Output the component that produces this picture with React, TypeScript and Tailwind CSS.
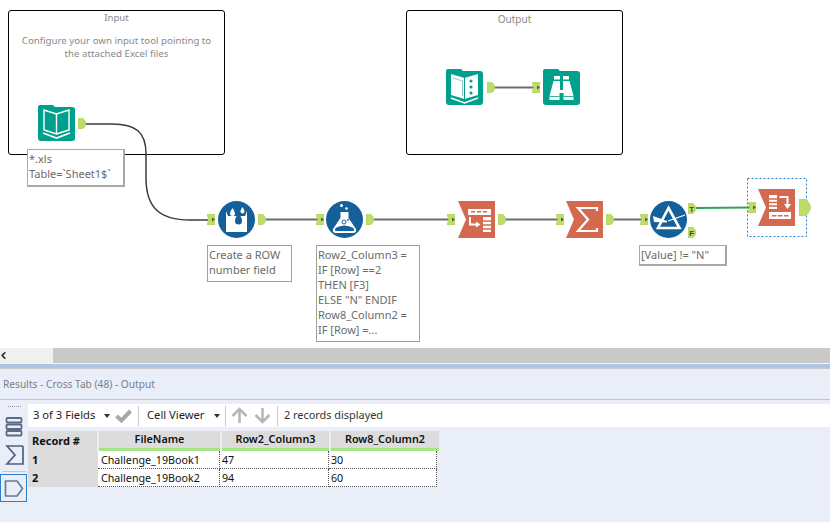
import { ChevronLeft } from "lucide-react";
import type { ReactNode } from "react";

const teal = "#00a08c";
const orange = "#d5694f";
const blue = "#14609b";

function InAnchor({ className }: { className: string }) {
  return (
    <svg className={`absolute ${className}`} width="8" height="11" viewBox="0 0 8 11">
      <path d="M0 0H8V11H0L1.500 5.500Z" fill="#bfdc6b" stroke="#a9c75a" strokeWidth="0.500" />
      <path d="M5 3.500L8 5.500L5 7.500Z" fill="#4e5f34" />
    </svg>
  );
}

function OutAnchor({ className, label }: { className: string; label?: string }) {
  return (
    <svg className={`absolute ${className}`} width="8" height="11" viewBox="0 0 8 11">
      <path d="M0 0H4Q7 1 8 5.500Q7 10 4 11H0Z" fill="#bfdc6b" stroke="#a9c75a" strokeWidth="0.500" />
      {label && (
        <text x="3.800" y="8.500" fontSize="8" fontWeight="700" textAnchor="middle" fill="#33503a" fontFamily="Liberation Sans, sans-serif">
          {label}
        </text>
      )}
    </svg>
  );
}

function Tool({ className, children }: { className: string; children: ReactNode }) {
  return (
    <svg className={`absolute ${className}`} width="37" height="37" viewBox="0 0 37 37">
      {children}
    </svg>
  );
}

const folder = <path d="M2 0H15L17 2H34Q37 2 37 5V33Q37 36 34 36H3Q0 36 0 33V2Q0 0 2 0Z" fill={teal} />;
const ribbon = <path d="M0 0H37V37H0L8 18.500Z" fill={orange} />;

function Note({ className, children }: { className: string; children: ReactNode }) {
  return (
    <div className={`absolute border border-[#a0a0a0] bg-white px-[1px] py-[1px] text-[11px] leading-[15px] text-[#6b6b6b] ${className}`}>
      {children}
    </div>
  );
}

function Canvas() {
  return (
    <div className="relative h-[348px] overflow-hidden bg-white">
      {/* containers */}
      <div className="absolute left-[8px] top-[10px] h-[145px] w-[217px] rounded-[3px] border border-black text-center text-[9.700px] text-[#8a8a8a]">
        <div className="leading-[14px]">Input</div>
        <div className="mt-[10px] leading-[12.500px]">
          <div>Configure your own input tool pointing to</div>
          <div>the attached Excel files</div>
        </div>
      </div>
      <div className="absolute left-[406px] top-[10px] h-[145px] w-[217px] rounded-[3px] border border-black text-center text-[10px] leading-[14px] text-[#8a8a8a]">
        <div className="mt-[1px]">Output</div>
      </div>

      {/* connections */}
      <svg className="absolute left-0 top-0" width="830" height="348" fill="none">
        <path d="M85 124H112C136 124 146 132 146 154V178C146 208 160 220 190 220H208" stroke="#3c3c3c" strokeWidth="1.500" />
        <g stroke="#6e6e6e" strokeWidth="2">
          <path d="M494 87.500H535" />
          <path d="M266 219.500H320" />
          <path d="M374 219.500H450" />
          <path d="M505 219.500H560" />
          <path d="M613 219.500H644" />
        </g>
        <path d="M696 208L750 207.500" stroke="#2ea35c" strokeWidth="2" />
        <rect x="747.500" y="178.500" width="59" height="58" stroke="#2b7fd0" strokeDasharray="2 2" />
      </svg>

      {/* input tool */}
      <Tool className="left-[38px] top-[105px]">
        {folder}
        <g fill="none" stroke="#fff" strokeWidth="1.400">
          <path d="M18.500 9L6 5V25L18.500 29L31 25V5Z" />
          <path d="M18.500 9V29" />
        </g>
        <path d="M5 28L18.500 33L32 28" fill="none" stroke="#fff" strokeWidth="1.800" />
      </Tool>
      <OutAnchor className="left-[78px] top-[118px]" />
      <Note className="left-[27px] top-[149px] h-[38px] w-[98px] !border-2 !border-t !border-l !border-[#a8a8a8]">
        *.xls
        <br />
        Table=`Sheet1$`
      </Note>

      {/* output tool and browse */}
      <Tool className="left-[446px] top-[69px]">
        {folder}
        <path d="M18.500 9L5 5V26L18.500 30L32 26V5Z" fill="#fff" />
        <path d="M18.500 9V30" stroke={teal} strokeWidth="1" />
        <path d="M7 9L16.500 12V27" fill="none" stroke={teal} strokeWidth="0.500" />
        <g fill={teal}>
          <circle cx="25" cy="12" r="1.600" />
          <circle cx="25" cy="18" r="1.600" />
          <circle cx="25" cy="24" r="1.600" />
        </g>
        <path d="M5 29L18.500 34L32 29" fill="none" stroke="#fff" strokeWidth="1.600" />
      </Tool>
      <OutAnchor className="left-[487px] top-[82px]" />
      <InAnchor className="left-[532px] top-[82px]" />
      <Tool className="left-[543px] top-[69px]">
        {folder}
        <g fill="#fff">
          <path d="M11 7H17V10.500H11Z" />
          <path d="M20 7H26V10.500H20Z" />
          <path d="M10.500 12H17V21H20V12H26.500L30.500 27V31H20.500V24H16.500V31H6.500V27Z" />
        </g>
        <path d="M6.500 27.500H16.500M20.500 27.500H30.500" stroke={teal} strokeWidth="0.800" />
      </Tool>

      {/* record id */}
      <InAnchor className="left-[207px] top-[214px]" />
      <svg className="absolute left-[218px] top-[201px]" width="37" height="37" viewBox="0 0 37 37">
        <circle cx="18.500" cy="18.500" r="18.500" fill={blue} />
        <path d="M8 10L10 15H27L29 10V31H8Z" fill="#fff" />
        <path d="M14.500 7Q17 10.500 17 12.500A2.500 2.500 0 0 1 12 12.500Q12 10.500 14.500 7Z" fill="#fff" />
        <path d="M20.500 12Q24 17 24 20A3.500 3.500 0 0 1 17 20Q17 17 20.500 12Z" fill={blue} />
        <path d="M24.500 6Q26.500 9 26.500 10.500A2 2 0 0 1 22.500 10.500Q22.500 9 24.500 6Z" fill="#fff" />
      </svg>
      <OutAnchor className="left-[258px] top-[214px]" />
      <Note className="left-[207px] top-[245px] h-[37px] w-[85px]">
        Create a ROW
        <br />
        number field
      </Note>

      {/* formula */}
      <InAnchor className="left-[316px] top-[214px]" />
      <svg className="absolute left-[326px] top-[201px]" width="37" height="37" viewBox="0 0 37 37">
        <circle cx="18.500" cy="18.500" r="18.500" fill={blue} />
        <path d="M14.500 11H22.500V17L30 28Q31 32 27 32H10Q6 32 7 28L14.500 17Z" fill="#fff" />
        <path d="M9.500 27Q18 22 27.500 27L28 30H9Z" fill={blue} />
        <circle cx="15.500" cy="4.500" r="1.500" fill="#fff" />
        <circle cx="20.500" cy="7.500" r="1.300" fill="#fff" />
        <circle cx="18" cy="21" r="2" fill="none" stroke={blue} />
        <circle cx="22" cy="19" r="0.900" fill={blue} />
      </svg>
      <OutAnchor className="left-[366px] top-[214px]" />
      <Note className="left-[316px] top-[245px] h-[97px] w-[104px]">
        Row2_Column3 =
        <br />
        IF [Row] ==2
        <br />
        THEN [F3]
        <br />
        ELSE "N" ENDIF
        <br />
        Row8_Column2 =
        <br />
        IF [Row] =...
      </Note>

      {/* cross tab */}
      <InAnchor className="left-[447px] top-[214px]" />
      <Tool className="left-[458px] top-[201px]">
        {ribbon}
        <rect x="10" y="8" width="23" height="6" fill="#fff" />
        <g fill={orange}>
          <rect x="13" y="10" width="4" height="1.500" />
          <rect x="19" y="10" width="4" height="1.500" />
          <rect x="25" y="10" width="4" height="1.500" />
        </g>
        <path d="M12 16V23.500H19" fill="none" stroke="#fff" strokeWidth="2" />
        <path d="M18 20.500L22.500 23.500L18 26.500Z" fill="#fff" />
        <rect x="25" y="16" width="8" height="15" fill="#fff" />
        <path d="M25 20H33M25 24H33M25 28H33" stroke={orange} strokeWidth="1.500" />
      </Tool>
      <OutAnchor className="left-[498px] top-[214px]" />

      {/* summarize */}
      <InAnchor className="left-[556px] top-[214px]" />
      <Tool className="left-[566px] top-[201px]">
        {ribbon}
        <path d="M31 10V7H12L22 18.500L12 30H31V27" fill="none" stroke="#fff" strokeWidth="2.200" />
      </Tool>
      <OutAnchor className="left-[606px] top-[214px]" />

      {/* filter */}
      <InAnchor className="left-[640px] top-[214px]" />
      <svg className="absolute left-[650px] top-[201px]" width="37" height="37" viewBox="0 0 37 37">
        <circle cx="18.500" cy="18.500" r="18.500" fill={blue} />
        <path d="M18.500 7L29.500 27H8Z" fill="none" stroke="#fff" strokeWidth="2.600" />
        <path d="M18 20L35 14" fill="none" stroke="#fff" strokeWidth="1.200" />
        <path d="M3 15L17 20V21.500L4 21Z" fill="#fff" />
      </svg>
      <OutAnchor className="left-[688px] top-[203px]" label="T" />
      <OutAnchor className="left-[688px] top-[227px]" label="F" />
      <Note className="left-[639px] top-[245px] h-[21px] w-[88px] !border-2 !border-t !border-l !border-[#a8a8a8]">
        [Value] != "N"
      </Note>

      {/* selected cross tab */}
      <InAnchor className="left-[748px] top-[202px]" />
      <Tool className="left-[758px] top-[189px]">
        {ribbon}
        <rect x="11" y="6" width="8" height="14" fill="#fff" />
        <path d="M11 10H19M11 13.500H19M11 17H19" stroke={orange} strokeWidth="1.300" />
        <path d="M21.500 8H29.500V15" fill="none" stroke="#fff" strokeWidth="2" />
        <path d="M26 15H33L29.500 20Z" fill="#fff" />
        <rect x="11" y="23" width="22" height="7" fill="#fff" />
        <g fill={orange}>
          <rect x="14" y="26" width="4.500" height="1.500" />
          <rect x="20" y="26" width="4.500" height="1.500" />
          <rect x="26" y="26" width="4.500" height="1.500" />
        </g>
      </Tool>
      <svg className="absolute left-[799px] top-[199px]" width="12" height="17" viewBox="0 0 12 17">
        <path d="M0 0H6Q10 2 12 8.500Q10 15 6 17H0Z" fill="#bfdc6b" stroke="#a9c75a" strokeWidth="0.500" />
      </svg>
    </div>
  );
}

function Separator() {
  return <div className="h-[20px] w-px bg-[#c8c8c8]" />;
}

function Caret() {
  return <div className="h-0 w-0 border-x-[3.500px] border-t-[4px] border-x-transparent border-t-[#333]" />;
}

function Toolbar() {
  return (
    <div className="flex h-[23px] items-center bg-white pl-[5px] text-[11.200px] text-[#222]">
      <span className="w-[62px] whitespace-nowrap">3 of 3 Fields</span>
      <div className="ml-[9px]">
        <Caret />
      </div>
      <svg className="ml-[5px]" width="17" height="14" viewBox="0 0 17 14">
        <path d="M1.500 7L6.500 11.500L15.500 2" fill="none" stroke="#a8a8a8" strokeWidth="4" />
      </svg>
      <div className="ml-[6px]">
        <Separator />
      </div>
      <span className="ml-[8px] w-[58px] whitespace-nowrap">Cell Viewer</span>
      <div className="ml-[9px]">
        <Caret />
      </div>
      <div className="ml-[5px]">
        <Separator />
      </div>
      <svg className="ml-[5px]" width="17" height="17" viewBox="0 0 17 17">
        <path d="M8.500 16V2M1.500 9L8.500 2L15.500 9" fill="none" stroke="#b5b5b5" strokeWidth="2.500" />
      </svg>
      <svg className="ml-[6px]" width="17" height="17" viewBox="0 0 17 17">
        <path d="M8.500 1V15M1.500 8L8.500 15L15.500 8" fill="none" stroke="#b5b5b5" strokeWidth="2.500" />
      </svg>
      <div className="ml-[6px]">
        <Separator />
      </div>
      <span className="ml-[6px] text-[10.900px] text-[#333]">2 records displayed</span>
    </div>
  );
}

const rows = [
  { id: "1", file: "Challenge_19Book1", a: "47", b: "30" },
  { id: "2", file: "Challenge_19Book2", a: "94", b: "60" },
];

function HeaderCell({ className, children }: { className: string; children: ReactNode }) {
  return (
    <div className={`flex h-[20px] items-center justify-center border-b-[3px] border-[#a5e585] bg-[#dcdcdc] text-[10.800px] font-semibold text-[#111] ${className}`}>
      {children}
    </div>
  );
}

function Table() {
  return (
    <div className="mt-[4px] w-[411px] text-[10.700px] text-[#111]">
      <div className="flex gap-[2px]">
        <div className="flex h-[20px] w-[69px] items-center bg-[#dcdcdc] pl-[4px] text-[11px] font-bold">Record #</div>
        <HeaderCell className="w-[121px]">FileName</HeaderCell>
        <HeaderCell className="w-[107px]">Row2_Column3</HeaderCell>
        <HeaderCell className="w-[108px]">Row8_Column2</HeaderCell>
      </div>
      {rows.map((r) => (
        <div key={r.id} className="flex h-[18px]">
          <div className="flex w-[70px] items-center bg-[#dcdcdc] pl-[4px] text-[11px] font-bold">{r.id}</div>
          <div className="flex w-[122px] items-center border-b border-r border-dotted border-[#555] bg-white pl-[3px] pt-[2px]">{r.file}</div>
          <div className="flex w-[109px] items-center border-b border-r border-dotted border-[#555] bg-white pl-[2px] pt-[2px]">{r.a}</div>
          <div className="flex w-[108px] items-center border-b border-r border-dotted border-[#555] bg-white pl-[2px] pt-[2px]">{r.b}</div>
        </div>
      ))}
    </div>
  );
}

function Rail() {
  return (
    <div className="flex w-[28px] shrink-0 flex-col items-center bg-[#e9eef8]">
      <div className="mt-[2px] h-px w-[13px] border-t border-dotted border-[#9a9a9a]" />
      <svg className="mt-[10px]" width="18" height="20" viewBox="0 0 18 20">
        <g fill="none" stroke="#5b6b85" strokeWidth="1.800">
          <rect x="1.500" y="1" width="15" height="4.500" rx="1" />
          <rect x="1.500" y="7.500" width="15" height="4.500" rx="1" />
          <rect x="1.500" y="14" width="15" height="4.500" rx="1" />
        </g>
      </svg>
      <svg className="mt-[8px]" width="19" height="20" viewBox="0 0 19 20">
        <path d="M18 1H2L10 10L2 19H18V1" fill="none" stroke="#4f6080" strokeWidth="1.700" />
      </svg>
      <div className="mt-[6px] h-px w-[24px] bg-[#c4c8d0]" />
      <div className="mt-[2px] flex h-[28px] w-[27px] items-center justify-center self-start border border-[#2b7fd0]">
        <svg width="20" height="17" viewBox="0 0 20 17">
          <path d="M1.500 1H13L18.500 8.500L13 16H1.500Z" fill="none" stroke="#6a7a95" strokeWidth="1.700" strokeLinejoin="round" />
        </svg>
      </div>
    </div>
  );
}

export default function App() {
  return (
    <div className="h-[522px] w-[830px] overflow-hidden bg-[#e9eef8] font-['Noto_Sans','Open_Sans',sans-serif]">
      <Canvas />
      {/* scrollbar */}
      <div className="flex h-[15px]">
        <div className="flex w-[53px] items-center bg-[#f0f0f0] text-[#222]">
          <ChevronLeft className="-ml-[2px]" size={11} strokeWidth={3.500} />
        </div>
        <div className="flex-1 bg-[#c9c9c9]" />
      </div>
      <div className="h-px bg-[#f4f4f4]" />
      <div className="h-[4px] bg-[#b0c3e2]" />
      <div className="h-px bg-[#c8c8c8]" />
      <div className="flex h-[31px] items-center border-b border-[#c4c4c4] pl-[3px] pt-[2px] text-[10.200px] text-[#7c8088]">
        Results - Cross Tab (48) - Output
      </div>
      <div className="flex pt-[4px]">
        <Rail />
        <div className="flex-1">
          <Toolbar />
          <Table />
        </div>
      </div>
    </div>
  );
}
